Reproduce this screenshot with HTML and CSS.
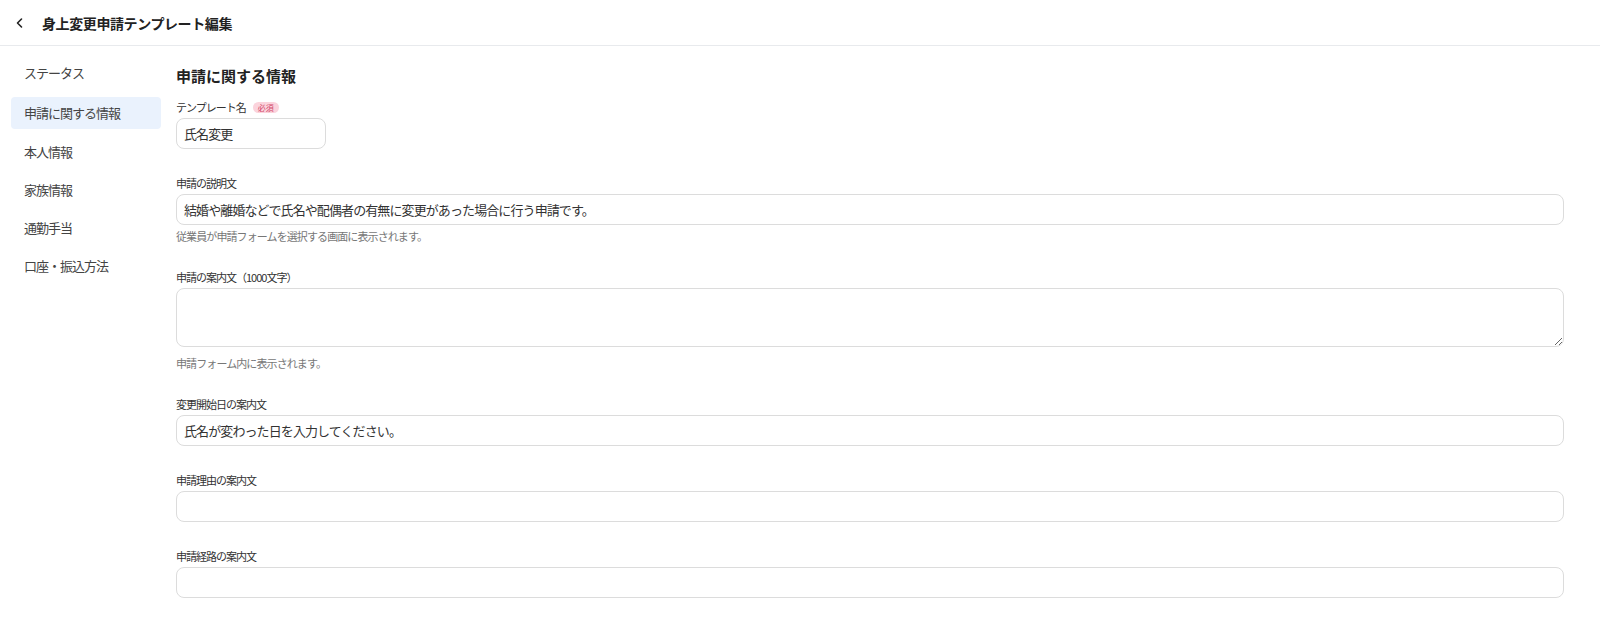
FILE: index.html
```html
<!DOCTYPE html>
<html lang="ja">
<head>
    <meta charset="UTF-8">
    <meta name="viewport" content="width=device-width, initial-scale=1.0">
    <title>身上変更申請テンプレート編集</title>
    <link rel="stylesheet" href="styles.css">
</head>
<body>
    <header class="topbar">
        <button class="back" type="button" aria-label="戻る">
            <svg width="12" height="12" viewBox="0 0 12 12"><polyline points="7.5,2 3.5,6 7.5,10" fill="none" stroke="#222" stroke-width="1.6" stroke-linecap="round" stroke-linejoin="round"/></svg>
        </button>
        <h1 class="title">身上変更申請テンプレート編集</h1>
    </header>

    <div class="layout">
        <nav class="sidenav">
            <a class="nav-item status" href="#">ステータス</a>
            <a class="nav-item active" href="#">申請に関する情報</a>
            <a class="nav-item" href="#">本人情報</a>
            <a class="nav-item" href="#">家族情報</a>
            <a class="nav-item" href="#">通勤手当</a>
            <a class="nav-item" href="#">口座・振込方法</a>
        </nav>

        <main class="content">
            <h2 class="section-title">申請に関する情報</h2>
            <div class="form">
                <div class="field">
                    <label class="label">テンプレート名<span class="required">必須</span></label>
                    <input class="input input-short" type="text" value="氏名変更">
                </div>
                <div class="field">
                    <label class="label">申請の説明文</label>
                    <input class="input" type="text" value="結婚や離婚などで氏名や配偶者の有無に変更があった場合に行う申請です。">
                    <p class="help">従業員が申請フォームを選択する画面に表示されます。</p>
                </div>
                <div class="field">
                    <label class="label">申請の案内文（1000文字）</label>
                    <textarea class="input textarea"></textarea>
                    <p class="help">申請フォーム内に表示されます。</p>
                </div>
                <div class="field">
                    <label class="label">変更開始日の案内文</label>
                    <input class="input" type="text" value="氏名が変わった日を入力してください。">
                </div>
                <div class="field">
                    <label class="label">申請理由の案内文</label>
                    <input class="input" type="text" value="">
                </div>
                <div class="field">
                    <label class="label">申請経路の案内文</label>
                    <input class="input" type="text" value="">
                </div>
            </div>
        </main>
    </div>
</body>
</html>
```

FILE: styles.css
```css
body {
    margin: 0;
    font-family: "Noto Sans CJK JP", "Noto Sans", sans-serif;
    background-color: #fff;
    color: #333;
}
.topbar {
    display: flex;
    align-items: center;
    height: 45px;
    padding-left: 12px;
    border-bottom: 1px solid #e8eaed;
}
.back {
    display: flex;
    align-items: center;
    justify-content: center;
    width: 16px;
    height: 24px;
    padding: 0;
    border: none;
    background: none;
}
.title {
    margin: 0 0 0 14px;
    font-size: 14px;
    font-weight: 700;
    letter-spacing: -0.4px;
    color: #222;
}
.layout {
    display: flex;
}
.sidenav {
    display: flex;
    flex-direction: column;
    gap: 6.25px;
    width: 150px;
    margin-left: 11px;
    padding-top: 13px;
}
.nav-item {
    height: 32px;
    line-height: 32px;
    padding: 0 13px;
    border-radius: 4px;
    font-size: 13px;
    letter-spacing: -1px;
    color: #444;
    text-decoration: none;
}
.nav-item.status {
    margin: -2px 0 2px;
}
.nav-item.active {
    background-color: #eaf2fd;
}
.content {
    flex: 1;
    padding: 19px 36px 0 15px;
}
.section-title {
    margin: 0 0 12px;
    font-size: 15px;
    line-height: 22px;
    font-weight: 700;
    color: #222;
}
.form {
    display: flex;
    flex-direction: column;
    gap: 26px;
}
.field {
    display: flex;
    flex-direction: column;
}
.label {
    display: flex;
    align-items: center;
    height: 16px;
    margin-bottom: 3px;
    font-size: 11px;
    letter-spacing: -1px;
    color: #333;
}
.required {
    margin-left: 7px;
    padding: 0 5px;
    height: 11px;
    line-height: 11px;
    border-radius: 6px;
    background-color: #fbd3dc;
    color: #d2486a;
    font-size: 8px;
    letter-spacing: 0;
}
.input {
    box-sizing: border-box;
    width: 100%;
    height: 31px;
    padding: 0 7px;
    border: 1px solid #dcdcdc;
    border-radius: 8px;
    font-family: "Noto Sans CJK JP", "Noto Sans", sans-serif;
    font-size: 13px;
    letter-spacing: -0.9px;
    color: #333;
    background-color: #fff;
    outline: none;
}
.input-short {
    width: 150px;
}
.textarea {
    height: 59px;
    margin-bottom: 5px;
    padding: 6px 7px;
    resize: vertical;
}
.help {
    margin: 4px 0 0;
    font-size: 11px;
    line-height: 14px;
    letter-spacing: -0.9px;
    color: #777;
}
```
